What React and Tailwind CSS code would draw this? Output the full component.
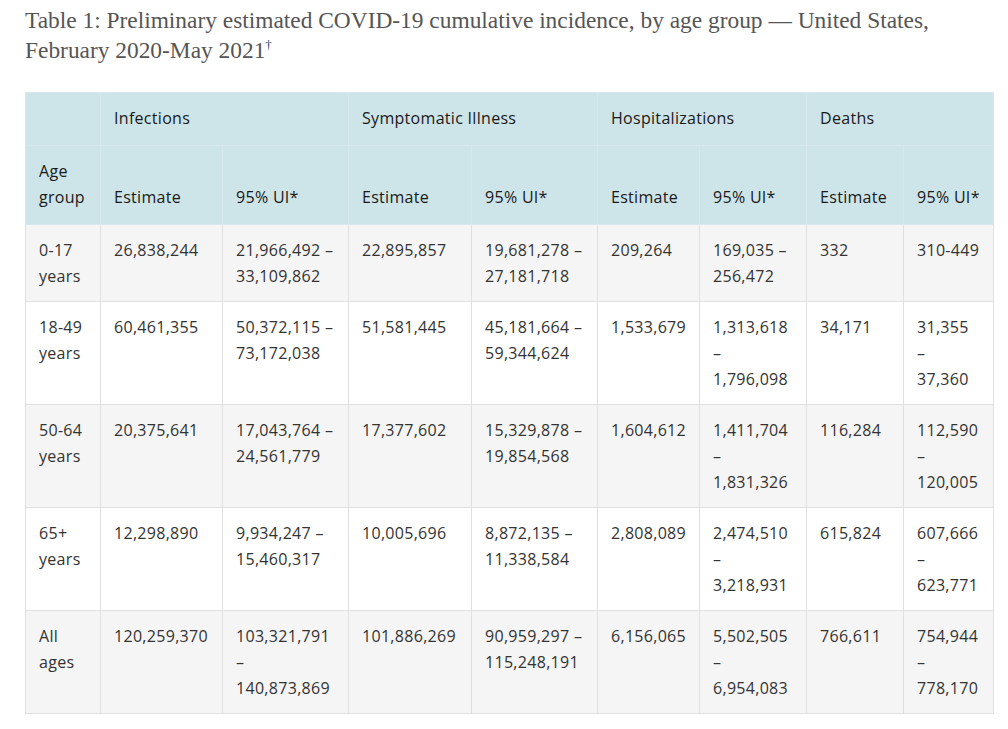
import React from 'react';

const groups = ['Infections', 'Symptomatic Illness', 'Hospitalizations', 'Deaths'];

const rows = [
    ['0-17 years', '26,838,244', '21,966,492 – 33,109,862', '22,895,857', '19,681,278 – 27,181,718', '209,264', '169,035 – 256,472', '332', '310-449'],
    ['18-49 years', '60,461,355', '50,372,115 – 73,172,038', '51,581,445', '45,181,664 – 59,344,624', '1,533,679', '1,313,618 – 1,796,098', '34,171', '31,355 – 37,360'],
    ['50-64 years', '20,375,641', '17,043,764 – 24,561,779', '17,377,602', '15,329,878 – 19,854,568', '1,604,612', '1,411,704 – 1,831,326', '116,284', '112,590 – 120,005'],
    ['65+ years', '12,298,890', '9,934,247 – 15,460,317', '10,005,696', '8,872,135 – 11,338,584', '2,808,089', '2,474,510 – 3,218,931', '615,824', '607,666 – 623,771'],
    ['All ages', '120,259,370', '103,321,791 – 140,873,869', '101,886,269', '90,959,297 – 115,248,191', '6,156,065', '5,502,505 – 6,954,083', '766,611', '754,944 – 778,170']
];

const widths = ['w-[75px]', 'w-[122px]', 'w-[126px]', 'w-[123px]', 'w-[126px]', 'w-[102px]', 'w-[107px]', 'w-[97px]', 'w-[90px]'];

const App = () => {
    return (
        <div className="bg-white min-h-[729px] pl-[25px] pt-[5px]">
            <h3 className="w-[968px] font-['Liberation_Serif',serif] text-[23.4px] leading-[30px] text-[#555] font-normal">
                Table 1: Preliminary estimated COVID-19 cumulative incidence, by age group — United States, February 2020-May 2021
                <span className="relative -top-[9px] text-[#1c3f6e] text-[13px] leading-none">†</span>
            </h3>

            <table className="mt-[27px] w-[968px] table-fixed border-collapse font-['Open_Sans',sans-serif] text-[16px] tracking-[0.3px] leading-[26px] text-[#333] border border-[#e0e0e0]">
                <colgroup>
                    {widths.map((w, i) => (
                        <col key={i} className={w} />
                    ))}
                </colgroup>
                <thead className="bg-[#cde4e8] text-[#1a1a1a]">
                    <tr>
                        <th className="border border-[#d6e8eb] px-[13px] pt-[12px] pb-[14px] font-normal text-left"></th>
                        {groups.map((g) => (
                            <th key={g} colSpan={2} className="border border-[#d6e8eb] px-[13px] pt-[12px] pb-[14px] font-normal text-left">
                                {g}
                            </th>
                        ))}
                    </tr>
                    <tr>
                        <th className="border border-[#d6e8eb] px-[13px] pt-[12px] pb-[14px] font-normal text-left align-bottom">
                            Age group
                        </th>
                        {groups.map((g) => (
                            <React.Fragment key={g}>
                                <th className="border border-[#d6e8eb] px-[13px] pt-[12px] pb-[14px] font-normal text-left align-bottom">Estimate</th>
                                <th className="border border-[#d6e8eb] px-[13px] pt-[12px] pb-[14px] font-normal text-left align-bottom">95% UI*</th>
                            </React.Fragment>
                        ))}
                    </tr>
                </thead>
                <tbody>
                    {rows.map((r, i) => (
                        <tr key={i} className={i % 2 === 0 ? 'bg-[#f5f5f5]' : 'bg-white'}>
                            {r.map((c, j) => (
                                <td key={j} className="border border-[#e0e0e0] px-[13px] py-[12px] align-top">
                                    {c}
                                </td>
                            ))}
                        </tr>
                    ))}
                </tbody>
            </table>
        </div>
    );
};

export default App;
